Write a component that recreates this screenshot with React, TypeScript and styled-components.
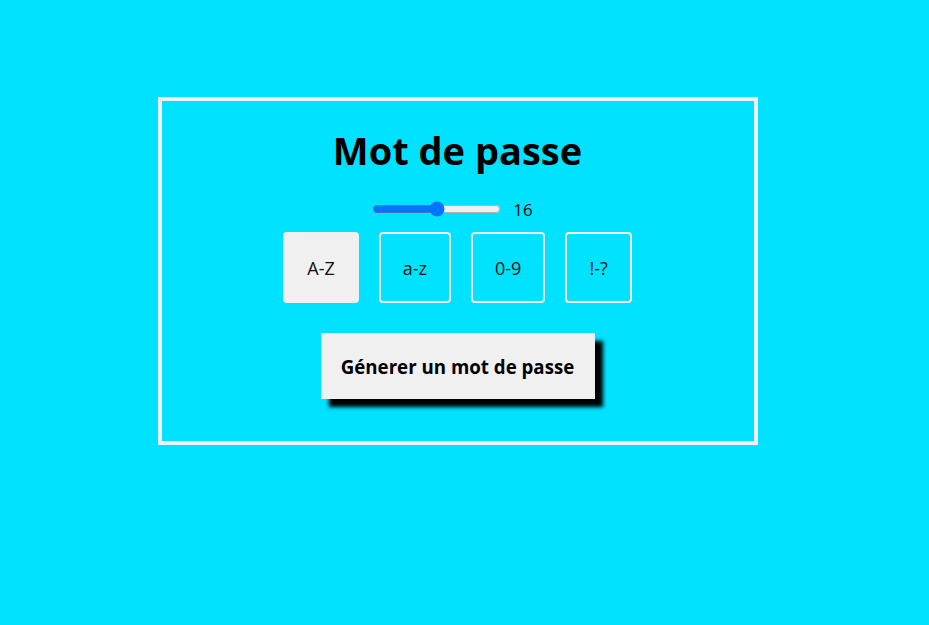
import React, { useState } from 'react';
import styled, { createGlobalStyle } from 'styled-components';

const GlobalStyle = createGlobalStyle`
  html, body {
    margin: 0;
    padding: 0;
    background: #00e2ff;
    font-family: "Open Sans", "Noto Sans", sans-serif;
  }
`;

const Page = styled.div`
  display: flex;
  justify-content: center;
  padding: 97px 14px 0 0;
`;

const Card = styled.div`
  width: 592px;
  height: 340px;
  border: 4px solid #f0f0f0;
  display: flex;
  flex-direction: column;
  align-items: center;
`;

const Title = styled.h1`
  margin: 22px 0 0;
  font-size: 38px;
  line-height: 54px;
  font-weight: 700;
  color: #000;
`;

const SliderRow = styled.div`
  display: flex;
  align-items: center;
  gap: 12px;
  margin-top: 21px;
  margin-right: 10px;
  height: 22px;
`;

const Range = styled.input`
  width: 129px;
  margin: 0;
`;

const Count = styled.span`
  font-size: 17px;
  color: #111;
`;

const Options = styled.div`
  display: flex;
  gap: 20px;
  margin-top: 12px;
`;

const Option = styled.button<{ $active: boolean }>`
  height: 71px;
  padding: 0 22px;
  border: 2px solid #f0f0f0;
  border-radius: 4px;
  background: ${p => (p.$active ? '#f0f0f0' : 'transparent')};
  font-family: "Open Sans", "Noto Sans", sans-serif;
  font-size: 18px;
  color: #111;
  cursor: pointer;
`;

const Generate = styled.button`
  margin-top: 30px;
  width: 274px;
  height: 66px;
  border: none;
  background: #f0f0f0;
  box-shadow: 8px 8px 4px #000;
  font-family: "Open Sans", "Noto Sans", sans-serif;
  font-size: 18.7px;
  font-weight: 700;
  color: #000;
  cursor: pointer;
`;

const sets = ['A-Z', 'a-z', '0-9', '!-?'];

export default function App() {
  const [length, setLength] = useState(16);
  const [active, setActive] = useState<string[]>(['A-Z']);

  const toggle = (s: string) =>
    setActive(a => (a.includes(s) ? a.filter(x => x !== s) : [...a, s]));

  return (
    <>
      <GlobalStyle />
      <Page>
        <Card>
          <Title>Mot de passe</Title>
          <SliderRow>
            <Range
              type="range"
              min={8}
              max={24}
              value={length}
              onChange={e => setLength(Number(e.target.value))}
            />
            <Count>{length}</Count>
          </SliderRow>
          <Options>
            {sets.map(s => (
              <Option key={s} $active={active.includes(s)} onClick={() => toggle(s)}>
                {s}
              </Option>
            ))}
          </Options>
          <Generate>Génerer un mot de passe</Generate>
        </Card>
      </Page>
    </>
  );
}
